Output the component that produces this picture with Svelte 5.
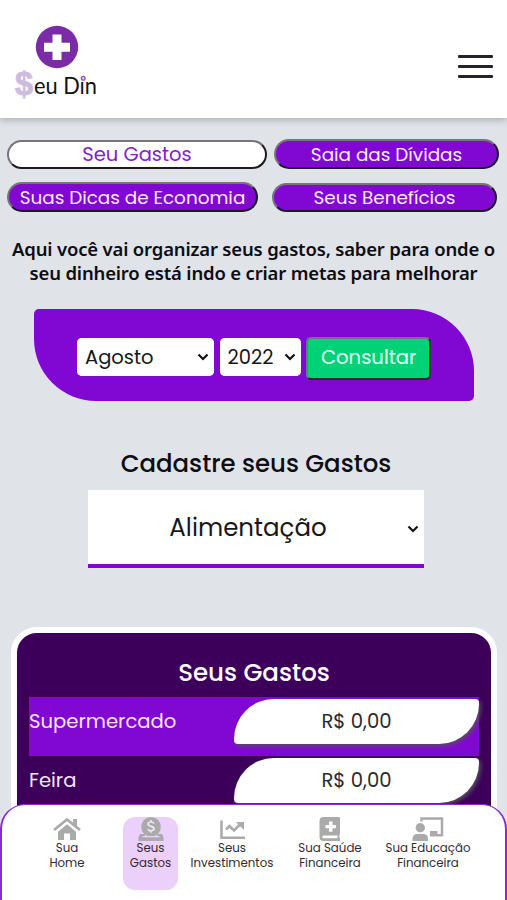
<script>
    const tabs = [
        { label: 'Seu Gastos', cls: 'gastos' },
        { label: 'Saia das Dívidas', cls: 'dividas' },
        { label: 'Suas Dicas de Economia', cls: 'dicas' },
        { label: 'Seus Benefícios', cls: 'beneficios' }
    ];
    const menu = [
        { icon: 'home', lines: ['Sua', 'Home'] },
        { icon: 'coin', lines: ['Seus', 'Gastos'] },
        { icon: 'chart', lines: ['Seus', 'Investimentos'] },
        { icon: 'book', lines: ['Sua Saúde', 'Financeira'] },
        { icon: 'teacher', lines: ['Sua Educação', 'Financeira'] }
    ];
    const expenses = ['Supermercado', 'Feira'];

    let tab = 0;
    let current = 1;
</script>

<div class="page">
    <header>
        <svg class="logo" width="90" height="80" viewBox="0 0 90 80">
            <circle cx="45" cy="25" r="21.2" fill="#7b2ba6" />
            <path d="M40.500 12.500h9v8.300h8.500v9h-8.500V38h-9v-8.200H32v-9h8.500z" fill="#fff" />
            <text class="dollar" x="3" y="72.500" textLength="18" lengthAdjust="spacingAndGlyphs">$</text>
            <text class="brand" x="22" y="72" textLength="63" lengthAdjust="spacingAndGlyphs">eu Dın</text>
            <circle cx="71.200" cy="56.200" r="1.900" fill="#d9c4ea" stroke="#9156bd" stroke-width="1.300" />
        </svg>
        <button class="burger" aria-label="Menu"><i></i><i></i><i></i></button>
    </header>

    <main>
        <div class="tabs">
            {#each tabs as t, i}
                <button class="tab {t.cls}" class:selected={tab === i} on:click={() => tab = i}>{t.label}</button>
            {/each}
        </div>

        <p class="intro">Aqui você vai organizar seus gastos, saber para onde o<br />seu dinheiro está indo e criar metas para melhorar</p>

        <div class="search">
            <div class="select month">
                <select aria-label="Mês"><option>Agosto</option></select>
                <svg viewBox="0 0 12 8"><path d="M1.500 1.500L6 6l4.500-4.500" /></svg>
            </div>
            <div class="select year">
                <select aria-label="Ano"><option>2022</option></select>
                <svg viewBox="0 0 12 8"><path d="M1.500 1.500L6 6l4.500-4.500" /></svg>
            </div>
            <button class="consult">Consultar</button>
        </div>

        <h2>Cadastre seus Gastos</h2>
        <div class="select category">
            <select aria-label="Categoria"><option>Alimentação</option></select>
            <svg viewBox="0 0 12 8"><path d="M1.500 1.500L6 6l4.500-4.500" /></svg>
        </div>

        <section class="card">
            <h3>Seus Gastos</h3>
            {#each expenses as name}
                <div class="row">
                    <span class="name">{name}</span>
                    <span class="value">R$ 0,00</span>
                </div>
            {/each}
        </section>
    </main>

    <nav>
        {#each menu as item, i}
            <div class="item {item.icon}" class:active={current === i} on:click={() => current = i}>
                {#if item.icon === 'home'}
                    <svg width="28" height="24" viewBox="0 0 28 24">
                        <path d="M1 13L14 2.500 27 13" fill="none" stroke="#aaa" stroke-width="2.800" />
                        <path d="M20 2h4v8l-4-3.400z" />
                        <path d="M14 7.200l9 7.500V23h-6v-6.500h-6V23H5v-8.300z" />
                    </svg>
                {:else if item.icon === 'coin'}
                    <svg width="26" height="24" viewBox="0 0 26 24">
                        <circle cx="13" cy="9.800" r="9.800" />
                        <path d="M2 17h5v2.500h12V17h5l1.500 3.500V24H.5v-3.500z" />
                        <path d="M4.500 19.700h17" stroke="#ead0fb" stroke-width="1.300" />
                        <path d="M16 6.400c-.7-1-1.700-1.400-3-1.400-1.800 0-3 .8-3 2.100 0 3 6 1.500 6 4.500 0 1.400-1.200 2.200-3 2.200-1.400 0-2.500-.5-3.200-1.600M13 3v2M13 13.800v2" fill="none" stroke="#f0e4f7" stroke-width="1.700" />
                    </svg>
                {:else if item.icon === 'chart'}
                    <svg width="26" height="24" viewBox="0 0 26 24">
                        <path d="M2.500 3.500v17.200h23.500" fill="none" stroke="#aaa" stroke-width="2.600" />
                        <path d="M7 12.500l3.500-3.500 4.500 4.500 6-6" fill="none" stroke="#aaa" stroke-width="2.600" />
                        <path d="M17 5h8v8z" />
                    </svg>
                {:else if item.icon === 'book'}
                    <svg width="22" height="24" viewBox="0 0 22 24">
                        <path d="M4.500 0H20q1 0 1 1v15.500q0 .8-.7 1v3.300q.7.200.7 1V24H4.500Q.5 24 .5 20V4q0-4 4-4z" />
                        <path d="M10 4.500h3.500V8H17v3.200h-3.500v3.600H10v-3.600H6.500V8H10z" fill="#fff" />
                        <path d="M4.700 18.500h13.700v2.700H4.700q-1.400 0-1.400-1.300t1.400-1.400z" fill="#fff" />
                    </svg>
                {:else}
                    <svg width="32" height="24" viewBox="0 0 32 24">
                        <path d="M9.500 4.500V1.500h20.500v16.700H18" fill="none" stroke="#aaa" stroke-width="2.500" />
                        <path d="M18 14h7.500v5H18z" />
                        <circle cx="8.300" cy="10.700" r="4.700" />
                        <path d="M.5 24v-2q0-5 5-5h5.500q5 0 5 5v2z" />
                    </svg>
                {/if}
                <span>{item.lines[0]}</span>
                <span>{item.lines[1]}</span>
            </div>
        {/each}
    </nav>
</div>

<style>
    :global(body) {
        background: #e0e4e9;
    }

    * {
        box-sizing: border-box;
    }

    .page {
        height: 900px;
        overflow: hidden;
        font-family: Poppins, Inter, sans-serif;
        color: #0d0d12;
    }

    button, select {
        font: inherit;
        white-space: nowrap;
    }

    /* HEADER */

    header {
        height: 118px;
        display: flex;
        justify-content: space-between;
        align-items: flex-start;
        padding: 22px 14px 0 12px;
        background: #fff;
        box-shadow: 0 2px 7px rgba(0, 0, 0, .25);
    }

    .dollar {
        font: 700 33px "Liberation Sans", sans-serif;
        fill: #cfbcdc;
        stroke: #cfbcdc;
        stroke-width: .8;
    }

    .brand {
        font: 24px Lato, sans-serif;
        fill: #111;
    }

    .burger {
        display: flex;
        flex-direction: column;
        gap: 7px;
        margin-top: 33px;
        padding: 0;
        border: 0;
        background: none;
    }

    .burger i {
        width: 35px;
        height: 3px;
        border-radius: 1px;
        background: #242328;
    }

    /* TABS */

    .tabs {
        display: grid;
        grid-template-columns: 260px 225px;
        column-gap: 7px;
        row-gap: 13px;
        padding: 21px 0 0 7px;
    }

    .tab {
        height: 30px;
        padding: 1px 0 0;
        border: 2px solid;
        border-color: #77747c #1d1824 #1d1824 #77747c;
        border-radius: 15px;
        background: #8108d2;
        color: #fbeaff;
        font-size: 18.400px;
        line-height: 24px;
    }

    .selected {
        background: #fff;
        color: #8420c8;
    }

    .gastos {
        margin-top: 1px;
        height: 29px;
        padding-top: 0;
        font-size: 19.500px;
    }

    .dicas {
        width: 251px;
    }

    .beneficios {
        width: 225px;
        height: 29px;
        margin: 1px 0 0 -2px;
    }

    .intro {
        margin: 25px 0 0;
        font: 600 18.500px/24px "Noto Sans", sans-serif;
        letter-spacing: -.18px;
        text-align: center;
        white-space: nowrap;
    }

    /* SEARCH */

    .search {
        width: 440px;
        height: 92px;
        margin: 24px 0 0 34px;
        padding: 29px 43px 0;
        display: flex;
        gap: 6px;
        background: #8108d2;
        border-radius: 5px 62px 5px 62px;
    }

    .select {
        position: relative;
        height: 38px;
        background: #fff;
    }

    .select select {
        appearance: none;
        width: 100%;
        height: 100%;
        padding: 0 8px;
        border: 0;
        border-radius: inherit;
        background: #fff;
        color: #17171a;
        font-size: 19.500px;
    }

    .select svg {
        position: absolute;
        right: 5px;
        top: 15px;
        width: 12px;
        height: 8px;
        fill: none;
        stroke: #111;
        stroke-width: 2.200;
    }

    .month {
        width: 137px;
        border-radius: 5px;
    }

    .year {
        width: 82px;
        border-radius: 5px;
    }

    .consult {
        width: 125px;
        height: 43px;
        margin: -1px 0 0 -1px;
        padding: 0 0 3px;
        border: 2px solid;
        border-color: #6c7580 #19302b #19302b #6c7580;
        border-radius: 5px;
        background: #02d277;
        color: #e4fff4;
        font-size: 19.600px;
        line-height: 36px;
    }

    h2 {
        margin: 45px 0 0;
        padding-left: 5px;
        font-size: 24.400px;
        line-height: 36px;
        font-weight: 500;
        text-align: center;
    }

    .category {
        width: 336px;
        height: 78px;
        margin: 8px 0 0 88px;
        border-bottom: 4px solid #8108d2;
    }

    .category select {
        padding: 0 25px 0 9px;
        font-size: 24.500px;
        text-align: center;
        text-align-last: center;
    }

    .category svg {
        top: 35px;
    }

    /* CARD */

    .card {
        width: 486px;
        height: 300px;
        margin: 59px 0 0 11px;
        padding: 22px 12px 0;
        border: 6px solid #fff;
        border-radius: 26px;
        background: #3c005b;
        color: #f3e6fa;
    }

    h3 {
        margin: 0;
        font-size: 24.500px;
        line-height: 36px;
        font-weight: 500;
        text-align: center;
        color: #fff;
    }

    .row {
        height: 58.500px;
        display: flex;
        justify-content: space-between;
        padding-top: 2px;
        font-size: 19.600px;
    }

    .row:nth-of-type(odd) {
        margin-top: 6px;
        background: #8108d2;
    }

    .name {
        line-height: 44px;
    }

    .value {
        width: 245px;
        height: 45px;
        border-radius: 40px 4px 40px 4px;
        background: #fff;
        box-shadow: 2px 2px 4px #55505b;
        color: #2b2a2e;
        line-height: 44px;
        text-align: center;
    }

    /* BOTTOM MENU */

    nav {
        position: fixed;
        left: 0;
        right: 0;
        top: 804px;
        height: 130px;
        display: flex;
        padding: 12px 20px 0;
        border: 1px solid #8a2bd0;
        border-width: 1px 2px;
        border-radius: 25px 25px 0 0;
        background: #fff;
    }

    .item {
        display: flex;
        flex-direction: column;
        align-items: center;
        height: 73px;
        font-size: 11.800px;
        line-height: 14.500px;
        white-space: nowrap;
        color: #302b34;
    }

    .item svg {
        margin-bottom: 0;
        flex-shrink: 0;
        fill: #aaa;
    }

    .home {
        width: 60px;
        margin: 0 26px 0 15px;
    }

    .coin {
        width: 55px;
    }

    .active {
        border-radius: 12px;
        background: #ead0fb;
    }

    .chart {
        width: 90px;
        margin-left: 9px;
    }

    .book {
        width: 70px;
        margin-left: 18px;
    }

    .teacher {
        width: 90px;
        margin-left: 18px;
    }
</style>
